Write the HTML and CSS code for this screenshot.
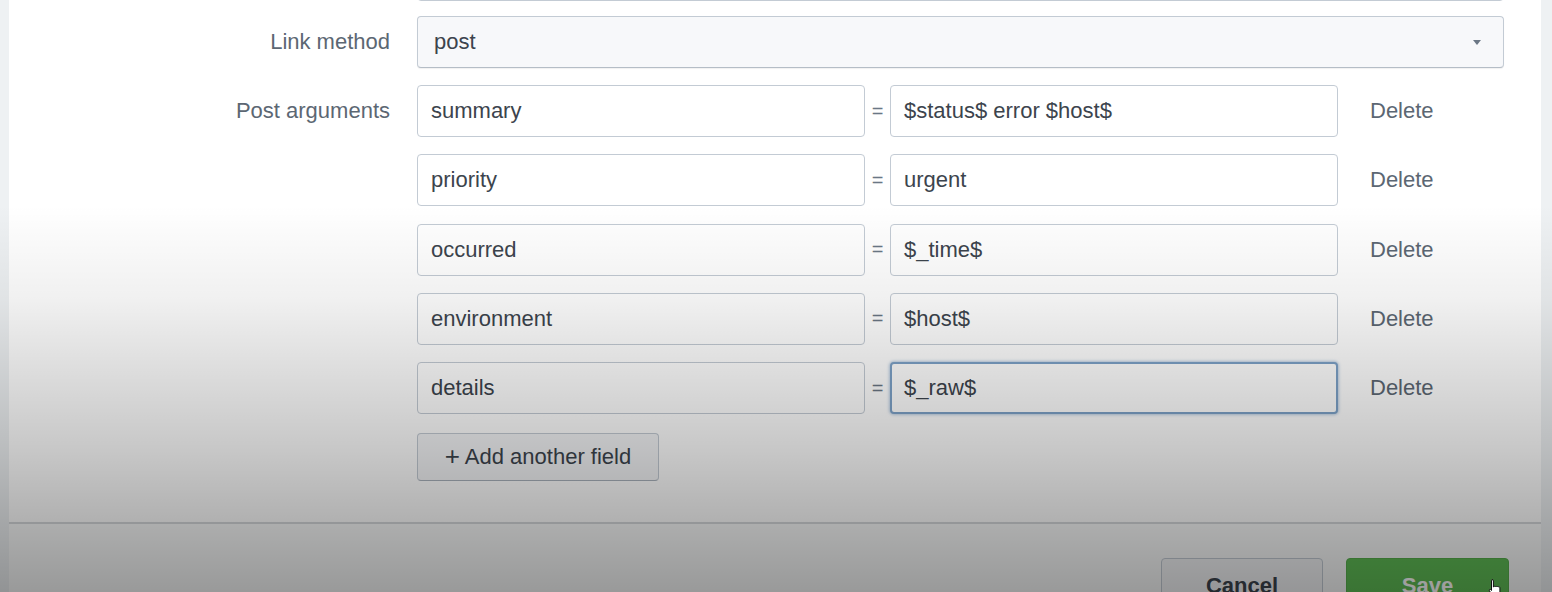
FILE: index.html
```html
<!DOCTYPE html>
<html lang="en">
<head>
<meta charset="utf-8">
<title>Webhook alert action</title>
<link rel="stylesheet" href="styles.css">
</head>
<body>
<div class="modal">
  <div class="modal-body">
    <div class="form-row">
      <div class="label"></div>
      <div class="control"><div class="input full"></div></div>
    </div>
    <div class="form-row">
      <div class="label">Link method</div>
      <div class="control">
        <div class="select">
          <span>post</span>
          <span class="caret"></span>
        </div>
      </div>
    </div>
    <div class="form-row args">
      <div class="label">Post arguments</div>
      <div class="control">
        <div class="arg-list">
          <div class="arg">
            <div class="input key">summary</div>
            <span class="eq">=</span>
            <div class="input val">$status$ error $host$</div>
            <span class="delete">Delete</span>
          </div>
          <div class="arg">
            <div class="input key">priority</div>
            <span class="eq">=</span>
            <div class="input val">urgent</div>
            <span class="delete">Delete</span>
          </div>
          <div class="arg">
            <div class="input key">occurred</div>
            <span class="eq">=</span>
            <div class="input val">$_time$</div>
            <span class="delete">Delete</span>
          </div>
          <div class="arg">
            <div class="input key">environment</div>
            <span class="eq">=</span>
            <div class="input val">$host$</div>
            <span class="delete">Delete</span>
          </div>
          <div class="arg">
            <div class="input key">details</div>
            <span class="eq">=</span>
            <div class="input val focused">$_raw$</div>
            <span class="delete">Delete</span>
          </div>
          <div class="add-row">
            <button class="btn add"><span class="plus">+</span> Add another field</button>
          </div>
        </div>
      </div>
    </div>
  </div>
  <div class="modal-footer">
    <button class="btn cancel">Cancel</button>
    <button class="btn save">Save</button>
  </div>
</div>
<div class="shade"></div>
<svg class="cursor" width="16" height="20" viewBox="0 0 16 20">
  <path d="M4 1.5c.8 0 1.4.6 1.4 1.4V9l.4-.1c.2-.8 1.7-.9 2.1 0 .3-.7 1.7-.8 2.1.1.5-.5 1.8-.3 1.9.7V15c0 2-1.4 3.5-3.4 3.5H6.4c-1 0-1.8-.5-2.3-1.300L1.4 12.6c-.4-.8.5-1.6 1.2-1l.9.9V2.9c0-.8.5-1.4.5-1.4z" fill="#fff" stroke="#111" stroke-width="1"/>
</svg>
</body>
</html>
```

FILE: styles.css
```css
* { box-sizing: border-box; }

html, body {
  margin: 0;
  padding: 0;
  width: 1552px;
  height: 592px;
  overflow: hidden;
}

body {
  background: #eef1f3;
  font-family: "Liberation Sans", Arial, sans-serif;
  font-size: 22px;
  color: #3c444d;
  position: relative;
}

.modal {
  margin-left: 9px;
  width: 1532px;
  height: 592px;
  background: #ffffff;
  display: flex;
  flex-direction: column;
}

.modal-body {
  display: flex;
  flex-direction: column;
  gap: 15px;
  margin-top: -51px;
  padding-bottom: 41px;
  border-bottom: 2px solid #d6d9dc;
}

.form-row {
  display: flex;
  align-items: center;
}

.form-row.args {
  align-items: flex-start;
  margin-top: 2px;
}

.label {
  width: 381px;
  flex: none;
  text-align: right;
  color: #5c6773;
}

.args .label {
  height: 52px;
  line-height: 52px;
}

.control {
  margin-left: 27px;
  width: 1087px;
}

.input {
  height: 52px;
  border: 1px solid #c3cbd4;
  border-radius: 4px;
  background: #ffffff;
  padding-left: 13px;
  display: flex;
  align-items: center;
  color: #3c444d;
  white-space: nowrap;
}

.input.full { width: 100%; }

.select {
  height: 52px;
  border: 1px solid #c3cbd4;
  border-bottom-color: #b5bdc6;
  border-radius: 4px;
  background: #f7f8fa;
  padding: 0 22px 0 16px;
  display: flex;
  align-items: center;
  justify-content: space-between;
  color: #3c444d;
  box-shadow: 0 1px 1px rgba(0, 0, 0, 0.06);
}

.caret {
  width: 0;
  height: 0;
  border-left: 4px solid transparent;
  border-right: 4px solid transparent;
  border-top: 5px solid #6b7785;
}

.arg-list {
  display: flex;
  flex-direction: column;
  gap: 17.25px;
}

.arg {
  display: flex;
  align-items: center;
  height: 52px;
}

.arg .input { width: 448px; }

.eq {
  width: 25px;
  text-align: center;
  color: #6b7785;
  font-size: 20px;
}

.input.focused {
  border: 2px solid #7da2c8;
  padding-left: 12px;
  box-shadow: 0 0 3px 1px rgba(125, 162, 200, 0.55);
}

.delete {
  margin-left: 32px;
  color: #5c6773;
}

.add-row {
  display: flex;
  padding-top: 1.5px;
}

.btn {
  font-family: "Liberation Sans", Arial, sans-serif;
  font-size: 22px;
  border-radius: 4px;
  cursor: pointer;
}

.btn.add {
  width: 242px;
  height: 48px;
  background: #f4f5f7;
  border: 1px solid #c3cbd4;
  border-bottom-color: #aab3bd;
  color: #3c444d;
  padding: 0;
}

.plus {
  font-size: 26px;
  font-weight: 300;
  line-height: 1;
  vertical-align: -1px;
}

.modal-footer {
  flex: 1;
  display: flex;
  justify-content: flex-end;
  align-items: flex-start;
  gap: 23px;
  padding: 34px 32px 0 0;
  background: #fafbfb;
}

.btn.cancel {
  width: 162px;
  height: 50px;
  background: #f4f5f7;
  border: 1px solid #c3cbd4;
  color: #3c444d;
  font-weight: bold;
  padding-top: 8px;
}

.btn.save {
  width: 163px;
  height: 50px;
  background: #5fbd55;
  border: 1px solid #57b04d;
  color: #ffffff;
  font-weight: bold;
  padding-top: 8px;
}

.shade {
  position: absolute;
  left: 0;
  top: 0;
  width: 1552px;
  height: 592px;
  pointer-events: none;
  background: linear-gradient(to bottom,
    rgba(0, 0, 0, 0) 0px,
    rgba(0, 0, 0, 0) 205px,
    rgba(0, 0, 0, 0.06) 300px,
    rgba(0, 0, 0, 0.22) 450px,
    rgba(0, 0, 0, 0.31) 523px,
    rgba(0, 0, 0, 0.39) 592px);
}

.cursor {
  position: absolute;
  left: 1488px;
  top: 578px;
}
```
